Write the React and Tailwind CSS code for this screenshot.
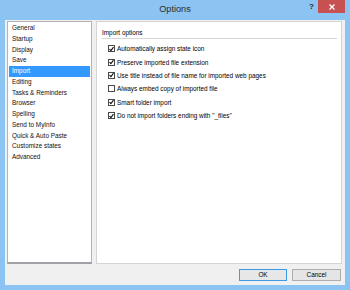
import { useState } from 'react'

const pages = [
  'General',
  'Startup',
  'Display',
  'Save',
  'Import',
  'Editing',
  'Tasks & Reminders',
  'Browser',
  'Spelling',
  'Send to MyInfo',
  'Quick & Auto Paste',
  'Customize states',
  'Advanced',
]

const importOptions = [
  { label: 'Automatically assign state icon', on: true },
  { label: 'Preserve imported file extension', on: true },
  { label: 'Use title instead of file name for imported web pages', on: true },
  { label: 'Always embed copy of imported file', on: false },
  { label: 'Smart folder import', on: true },
  { label: 'Do not import folders ending with "_files"', on: true },
]

function CheckBox({ checked }) {
  return (
    <span className="w-[7px] h-[7px] border border-[#4a4a4a] bg-white flex items-center justify-center shrink-0">
      {checked && (
        <svg width="6" height="6" viewBox="0 0 6 6" className="block">
          <path d="M0.6 3.1 L2.3 4.9 L5.4 0.8" fill="none" stroke="#111" strokeWidth="1.3" />
        </svg>
      )}
    </span>
  )
}

export default function App() {
  const [selected, setSelected] = useState('Import')
  const [opts, setOpts] = useState(importOptions)

  return (
    <div
      className="w-[350px] h-[290px] bg-[#8bc4f3] flex flex-col text-[#000] overflow-hidden"
      style={{ fontFamily: '"Liberation Sans", Arial, sans-serif' }}
    >
      {/* Title bar */}
      <div className="h-[20px] grid grid-cols-[1fr_auto_1fr] shrink-0">
        <div />
        <div className="text-[9.2px] leading-[18px] text-[#2e2e2e]">Options</div>
        <div className="flex justify-end items-start pr-[5px] gap-[4px]">
          <span className="text-[8px] font-bold leading-[13px] text-[#2a2a2a]">?</span>
          <button className="w-[27px] h-[13px] bg-[#c75050] flex items-center justify-center">
            <svg width="6" height="6" viewBox="0 0 6 6">
              <path d="M0.5 0.5 L5.5 5.5 M5.5 0.5 L0.5 5.5" stroke="#fff" strokeWidth="1.3" />
            </svg>
          </button>
        </div>
      </div>

      {/* Body */}
      <div className="flex-1 mx-[5px] mb-[5px] bg-[#f0f0f0] flex flex-col pt-[1px] pl-[2px] pr-[3px] text-[6.4px]">
        <div className="flex gap-[4px] h-[243px]">
          {/* Page list */}
          <div className="w-[85px] h-full bg-white border border-[#b4b4b8] border-b-[#a0a0a6] border-b-2 pt-[1px] pl-[1px] pr-[1px]">
            {pages.map((p) => (
              <div
                key={p}
                onClick={() => setSelected(p)}
                className={
                  'h-[10.75px] leading-[10.75px] pl-[3px] ' +
                  (selected === p ? 'bg-[#3399ff] text-white' : 'text-[#111]')
                }
              >
                {p}
              </div>
            ))}
          </div>

          {/* Import panel */}
          <div className="flex-1 h-full bg-white border border-[#d4d4d4] pt-[6px] pl-[5px] pr-[4px]">
            <div className="leading-[9px] pb-[1px] border-b border-[#d6d6d6]">Import options</div>
            <div className="flex flex-col pl-[6px] pt-[3px]">
              {opts.map((o, i) => (
                <label
                  key={o.label}
                  className="h-[13.4px] flex items-center gap-[2px]"
                  onClick={() =>
                    setOpts(opts.map((x, j) => (j === i ? { ...x, on: !x.on } : x)))
                  }
                >
                  <CheckBox checked={o.on} />
                  <span className="leading-[9px]">{o.label}</span>
                </label>
              ))}
            </div>
          </div>
        </div>

        {/* Buttons */}
        <div className="flex justify-end gap-[5px] pt-[5px] pr-[1px]">
          <button className="w-[48px] h-[12px] border border-[#3c9be6] bg-[#e7e7e7] leading-[10px]">OK</button>
          <button className="w-[49px] h-[12px] border border-[#adadad] bg-[#e5e5e5] leading-[10px]">Cancel</button>
        </div>
      </div>
    </div>
  )
}
